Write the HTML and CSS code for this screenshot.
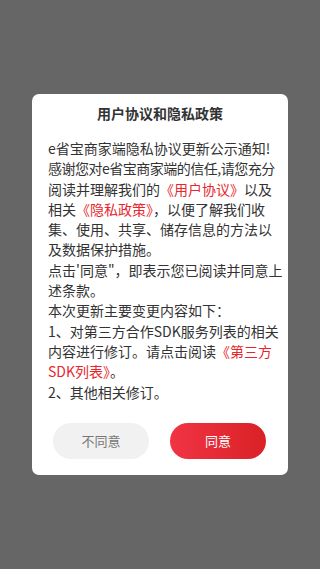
FILE: index.html
```html
<!DOCTYPE html>
<html lang="zh">
<head>
    <meta charset="UTF-8">
    <meta name="viewport" content="width=device-width, initial-scale=1.0">
    <title>用户协议和隐私政策</title>
    <link rel="stylesheet" href="styles.css">
</head>
<body>

    <div class="mask">
        <div class="dialog">
            <h1 class="dialog-title">用户协议和隐私政策</h1>
            <div class="dialog-body">
                <span class="line">e省宝商家端隐私协议更新公示通知!</span>
                <span class="line tight">感谢您对e省宝商家端的信任,请您充分</span>
                <span class="line">阅读并理解我们的<span class="link">《用户协议》</span>以及</span>
                <span class="line">相关<span class="link">《隐私政策》</span>，以便了解我们收</span>
                <span class="line">集、使用、共享、储存信息的方法以</span>
                <span class="line">及数据保护措施。</span>
                <span class="line">点击'同意"，即表示您已阅读并同意上</span>
                <span class="line">述条款。</span>
                <span class="line">本次更新主要变更内容如下：</span>
                <span class="line">1、对第三方合作SDK服务列表的相关</span>
                <span class="line">内容进行修订。请点击阅读<span class="link">《第三方</span></span>
                <span class="line"><span class="link">SDK列表》</span>。</span>
                <span class="line">2、其他相关修订。</span>
            </div>
            <div class="dialog-actions">
                <button class="btn btn-cancel">不同意</button>
                <button class="btn btn-ok">同意</button>
            </div>
        </div>
    </div>

</body>
</html>
```

FILE: styles.css
```css
html, body {
    margin: 0;
    padding: 0;
    height: 100%;
}

body {
    font-family: "Noto Sans CJK SC", "Noto Sans", sans-serif;
    background-color: #666666;
}

.mask {
    display: flex;
    justify-content: center;
    padding-top: 94px;
}

.dialog {
    width: 256px;
    box-sizing: border-box;
    padding: 9px 0 16px;
    background-color: #fff;
    border-radius: 7px;
}

.dialog-title {
    margin: 0;
    font-size: 14px;
    line-height: 20px;
    font-weight: bold;
    text-align: center;
    color: #333;
}

.dialog-body {
    margin: 15px 12px 0 16px;
    font-size: 14px;
    line-height: 20.3px;
    color: #333;
}

.line {
    display: block;
    white-space: nowrap;
}

.line.tight {
    letter-spacing: -0.5px;
}

.link {
    color: #e8262d;
}

.dialog-actions {
    display: flex;
    justify-content: space-between;
    margin: 21px 22px 0 21px;
}

.btn {
    width: 96px;
    height: 36px;
    border: none;
    border-radius: 18px;
    font-family: inherit;
    font-size: 13px;
    cursor: pointer;
}

.btn-cancel {
    background-color: #f1f1f1;
    color: #777;
}

.btn-ok {
    background: linear-gradient(90deg, #f03444, #da2126);
    color: #fff;
}
```
